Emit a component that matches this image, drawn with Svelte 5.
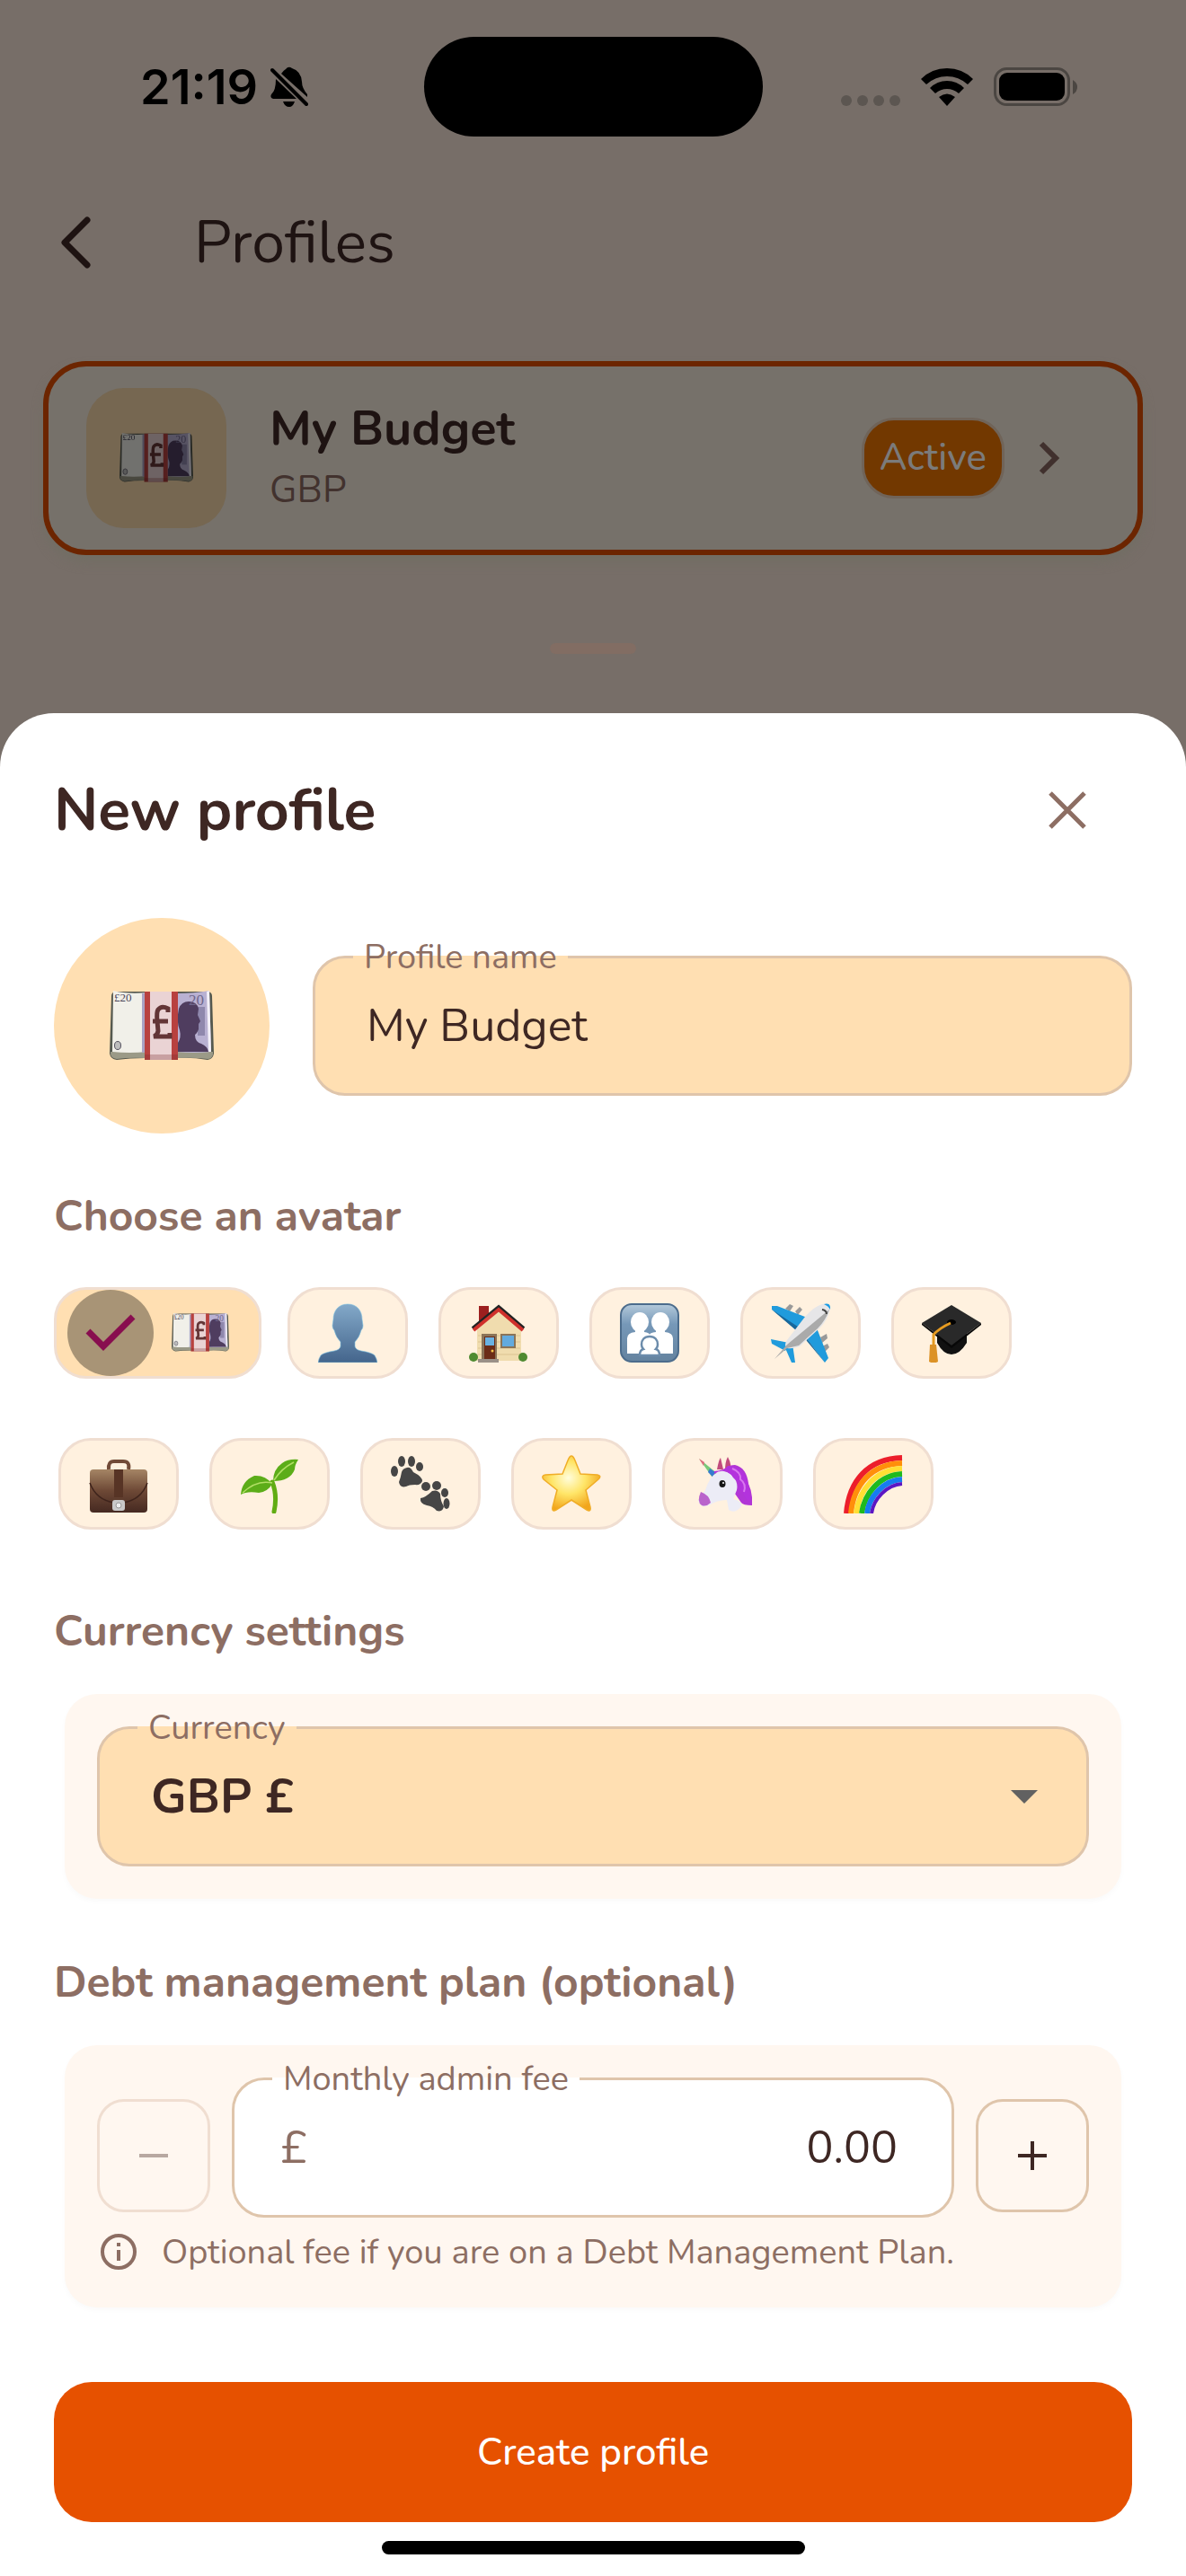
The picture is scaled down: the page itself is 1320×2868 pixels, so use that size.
<script lang="ts">
  const avatars = [
    "money", "person", "house", "family", "plane", "cap",
    "briefcase", "seedling", "paws", "star", "unicorn", "rainbow",
  ];

  let selected = $state("money");
  let profileName = $state("My Budget");
  let currency = $state("GBP");
  let fee = $state("0.00");

  const step = (by: number) => {
    fee = Math.max(0, Number(fee) + by).toFixed(2);
  };
</script>

{#snippet money()}
  <svg class="money" viewBox="0 0 116 78" aria-hidden="true">
    <path d="M2 6Q2 2 6 1L110 1Q114 2 114 6L116 70Q115 76 109 77Q92 74 76 75H40Q22 75 8 77Q1 76 0 70Z" fill="#55594f" />
    <path d="M1 68H115V71Q114 76 109 76Q94 74 76 75H40Q22 74 8 76Q1 75 1 70Z" fill="#9b9a87" />
    <path d="M4 0Q20 4 42 2V68Q22 70 3 68Z" fill="#f1f0e9" />
    <path d="M36 3L44 2V68L36 69Z" fill="#a9a3c4" />
    <path d="M74 3Q94 3 111 0L113 68Q94 70 74 68Z" fill="#b9b1d2" />
    <path d="M108 1L111 0L113 68H110Z" fill="#f3f0f8" />
    <path d="M98 18H106V50H98Z" fill="#8f88ad" />
    <path d="M77 20Q80 12 88 12Q97 12 99 20L98 27L101 34L99 37L99 43Q97 48 95 49Q95 57 102 59Q109 62 110 68H76V58Q80 52 78 44Q74 34 77 20Z" fill="#4f3d5f" />
    <text x="5" y="12" font-family="Liberation Serif, serif" font-size="13" fill="#4b4558">£20</text>
    <text x="88" y="16" font-family="Liberation Serif, serif" font-size="17" fill="#6f678c">20</text>
    <ellipse cx="9" cy="61" rx="3.5" ry="4.5" fill="#bdbdbd" stroke="#555260" />
    <path d="M39 1H76V77H39Z" fill="#b8413f" />
    <path d="M45 1H69V77H45Z" fill="#ead3d4" />
    <path d="M39 71H76V77H39Z" fill="#7a2a2a" opacity="0.3" />
    <path d="M65 24V20Q58 16 54 21Q52 24 53 34L54 45Q53 50 49 51H67V47M48 34H65" fill="none" stroke="#633536" stroke-width="5" />
  </svg>
{/snippet}

{#snippet art(name: string)}
  {#if name === "money"}
    {@render money()}
  {:else}
    <svg class="art" viewBox="0 0 66 66" aria-hidden="true">
      {#if name === "person"}
        <defs>
          <linearGradient id="person" x1="0" y1="0" x2="0" y2="1">
            <stop offset="0" stop-color="#83a9c9" /><stop offset="1" stop-color="#44658c" />
          </linearGradient>
        </defs>
        <path d="M33 1C43 1 49 8 49 18L50 25Q50 28 48 30Q46 38 41 43V48Q42 52 48 53Q60 55 63 58Q65 61 66 66H0Q1 61 3 58Q6 55 18 53Q24 52 25 48V43Q20 38 18 30Q16 28 16 25L17 18C17 8 23 1 33 1Z" fill="url(#person)" stroke="#78bfe0" stroke-width="0.6" />
      {:else if name === "house"}
        <path d="M11 3H22V20L11 28Z" fill="#9c1f1f" />
        <path d="M9 28L33 7L58 28V64H9Z" fill="#f0dcae" />
        <path d="M10 36H57M10 43H57M10 50H57M10 57H57" stroke="#dcc491" stroke-width="1" />
        <path d="M4 28L33 4L61 28" fill="none" stroke="#222" stroke-width="4" />
        <path d="M5 30L33 7L60 30" fill="none" stroke="#cf302b" stroke-width="4" />
        <path d="M14 34H31V64H14Z" fill="#8a7458" />
        <path d="M17 37H29V62H17Z" fill="#6b2c17" />
        <path d="M18 38H28V47H18Z" fill="#69b2e2" />
        <circle cx="26" cy="53" r="1.5" fill="#f6c64d" />
        <path d="M35 34H52V50H35Z" fill="#8a7458" />
        <path d="M37 36H50V48H37Z" fill="#62aade" />
        <circle cx="5" cy="60" r="5" fill="#4f8a31" /><circle cx="60" cy="60" r="5" fill="#4f8a31" />
        <path d="M10 62H33V66H10Z" fill="#9a9088" />
      {:else if name === "family"}
        <defs>
          <linearGradient id="family" x1="0" y1="0" x2="0" y2="1">
            <stop offset="0" stop-color="#b4cadb" /><stop offset="0.35" stop-color="#7698b8" /><stop offset="1" stop-color="#64839f" />
          </linearGradient>
        </defs>
        <rect x="1" y="1" width="64" height="64" rx="12" fill="url(#family)" stroke="#4c6c8c" stroke-width="2" />
        <g fill="#fff">
          <ellipse cx="22" cy="21" rx="10" ry="11" /><ellipse cx="45" cy="21" rx="10" ry="11" />
          <path d="M17 28H27V32Q33 33 33 35Q33 33 40 32V28H50V32Q59 33 59 39V56H8V39Q8 33 17 32Z" />
        </g>
        <path d="M33 37C39 37 42 41 42 46Q42 49 40 51Q44 52 44 58H22Q22 52 26 51Q24 49 24 46C24 41 27 37 33 37Z" fill="#fff" stroke="#6c8cab" stroke-width="2.5" />
      {:else if name === "plane"}
        <path d="M16 6L21 1L25 3L21 9ZM27 9L32 4L35 7L30 13ZM55 38L62 34L63 39L57 44ZM57 48L63 45L65 49L60 54Z" fill="#999" />
        <path d="M1 3L7 3L43 17L34 32L1 7ZM50 25L64 61L60 66L35 33ZM0 40L20 44L16 53L1 45ZM16 50L24 45L27 66L23 66Z" fill="#209bdc" />
        <path d="M1 7L33 28L29 31ZM36 34L60 66L40 42Z" fill="#17679b" />
        <path d="M57 1Q66-1 66 6Q64 17 55 27L32 48Q24 51 18 50Q14 47 18 41L38 15Q49 3 57 1Z" fill="#e6e6e8" />
        <path d="M65 7Q61 19 52 28L31 47L18 50L4 62L18 46Z" fill="#aaa" />
        <path d="M59 1Q67-1 66 7Q64 3 59 1Z" fill="#189be4" />
        <path d="M57 7Q62 8 62 12" stroke="#444" stroke-width="2" fill="none" />
      {:else if name === "cap"}
        <path d="M17 27H50V44Q42 57 33 57Q24 57 17 44Z" fill="#111" />
        <path d="M33 2L66 22L33 47L0 22Z" fill="#292929" />
        <path d="M0 22L33 47L66 22V24L33 50L0 24Z" fill="#080808" />
        <ellipse cx="33" cy="21" rx="5" ry="3" fill="#000" />
        <path d="M32 22Q19 28 13 35V47" fill="none" stroke="#e69b20" stroke-width="3" />
        <path d="M9 46H16L18 65Q13 68 8 65Z" fill="#dc9226" />
      {:else if name === "briefcase"}
        <defs>
          <linearGradient id="briefcase" x1="0" y1="0" x2="0" y2="1">
            <stop offset="0" stop-color="#a58565" /><stop offset="0.5" stop-color="#6d4835" /><stop offset="1" stop-color="#452921" />
          </linearGradient>
        </defs>
        <path d="M22 17Q21 8 28 8H38Q46 8 44 17" fill="none" stroke="#724b38" stroke-width="4" />
        <rect x="1" y="17" width="64" height="48" rx="4" fill="url(#briefcase)" />
        <path d="M1 32Q8 51 28 54H38Q58 51 65 32" fill="none" stroke="#3f241c" stroke-width="1.5" />
        <path d="M28 17H38V48H28Z" fill="#573425" />
        <rect x="26" y="51" width="14" height="12" rx="3" fill="#c9c9c9" /><circle cx="33" cy="57" r="3" fill="#eee" stroke="#999" />
      {:else if name === "seedling"}
        <path d="M36 31Q42 46 38 64" fill="none" stroke="#61ac13" stroke-width="5" stroke-linecap="round" />
        <path d="M37 30Q37 17 47 10Q54 5 65 6Q61 12 61 17Q56 30 37 30ZM36 33Q31 42 21 43Q8 41 1 45Q2 30 16 24Q28 23 36 33Z" fill="#5cad19" />
        <path d="M38 29Q46 16 60 9M36 32Q19 28 3 43" fill="none" stroke="#b2df65" stroke-width="1.5" />
      {:else if name === "paws"}
        <g fill="#464646">
          <path d="M18 15Q22 14 25 20Q35 25 35 30Q33 35 27 34Q20 34 17 36Q10 38 9 31Q11 26 12 20Q13 16 18 15Z" />
          <ellipse cx="4" cy="19" rx="4" ry="6" /><ellipse cx="12" cy="8" rx="4" ry="6" />
          <ellipse cx="23" cy="8" rx="4" ry="6" /><ellipse cx="32" cy="14" rx="4" ry="5" />
          <path d="M46 41Q52 39 55 44Q55 52 59 58Q58 65 51 63Q47 58 40 57Q32 55 33 49Q39 48 46 41Z" />
          <ellipse cx="39" cy="36" rx="5" ry="5" /><ellipse cx="51" cy="35" rx="5" ry="5" />
          <ellipse cx="60" cy="43" rx="4" ry="5" /><ellipse cx="62" cy="55" rx="3.5" ry="6" />
        </g>
      {:else if name === "star"}
        <defs>
          <radialGradient id="star" cx="0.45" cy="0.4" r="0.6">
            <stop offset="0" stop-color="#fffddc" /><stop offset="0.5" stop-color="#ffe567" /><stop offset="1" stop-color="#f2a51c" />
          </radialGradient>
        </defs>
        <path d="M33 2Q35 2 37 7L43 22L62 23Q67 24 63 28L49 40L54 59Q55 65 50 62L33 51L16 62Q11 65 12 59L17 40L2 28Q-1 24 4 23L23 22L29 7Q31 2 33 2Z" fill="url(#star)" stroke="#f0ad27" stroke-width="1.5" />
      {:else if name === "unicorn"}
        <path d="M28 22L7 5L22 26Z" fill="#78c979" />
        <path d="M7 5L13 9L12 13Z" fill="#e06b7f" />
        <path d="M19 16L25 20L23 26L17 20Z" fill="#367bd0" />
        <path d="M34 22Q35 12 47 12Q60 15 62 33Q67 43 66 57Q56 57 54 54L40 34Z" fill="#b135d6" />
        <path d="M27 17Q29 6 31 4L34 17ZM36 19Q36 8 39 3Q44 12 42 22Z" fill="#c14b7d" />
        <path d="M28 20Q38 17 44 24Q51 31 49 40L45 50Q56 53 54 58Q47 67 40 62Q39 56 38 51Q27 51 18 57Q8 61 6 51L14 40Q19 24 28 20Z" fill="#ececf6" />
        <path d="M9 42Q18 45 20 54Q15 59 10 57Q4 53 9 42Z" fill="#b963cb" />
        <path d="M24 22Q33 15 43 23Q46 29 53 31Q50 37 56 43Q58 50 64 53Q65 39 59 25Q51 12 39 13Q36 18 24 19Z" fill="#b333dd" />
        <path d="M44 16Q54 20 53 28Q60 33 57 42" fill="none" stroke="#d978ef" stroke-width="2" />
        <ellipse cx="33" cy="33" rx="3.5" ry="4" fill="#161616" /><circle cx="34" cy="32" r="1" fill="#fff" />
      {:else if name === "rainbow"}
        <g fill="none" stroke-width="6">
          <path d="M3 66C6 30 27 5 65 4" stroke="#ec1e2b" />
          <path d="M8 66C11 34 31 11 65 10" stroke="#ff8f0a" />
          <path d="M14 66C17 39 36 17 65 16" stroke="#ffdf34" />
          <path d="M20 66C23 44 40 23 65 22" stroke="#1fba1e" />
          <path d="M26 66C28 48 44 29 65 28" stroke="#167cf0" />
          <path d="M31 66C33 50 48 34 65 33" stroke="#5c16c4" stroke-width="4" />
        </g>
      {/if}
    </svg>
  {/if}
{/snippet}

<div class="screen">
  <div class="status">
    <div class="clock">
      <span>21:19</span>
      <svg width="42" height="46" viewBox="0 0 42 46" aria-hidden="true">
        <path d="M12 8Q15 4 17 3Q20-1 24 2Q34 5 35 17Q35 24 41 31V34ZM6 14L29 36H3Q-1 35 1 31Q6 27 6 14ZM14 39H27Q25 45 21 45Q16 45 14 39Z" />
        <path d="M2 4L40 42" stroke="#000" stroke-width="4" stroke-linecap="round" />
      </svg>
    </div>
    <div class="island"></div>
    <div class="signals">
      <svg width="66" height="42" viewBox="0 0 66 42" aria-hidden="true">
        <g fill="#5c5651"><circle cx="6" cy="36" r="6" /><circle cx="24" cy="36" r="6" /><circle cx="42" cy="36" r="6" /><circle cx="60" cy="36" r="6" /></g>
      </svg>
      <svg width="58" height="42" viewBox="0 0 58 42" aria-hidden="true">
        <path d="M0 12Q12 0 29 0T58 12L52 18Q42 9 29 9T6 18ZM10 22Q18 14 29 14T48 22L42 28Q36 23 29 23T16 28ZM20 32Q29 25 38 32L29 42Z" />
      </svg>
      <svg width="93" height="44" viewBox="0 0 93 44" aria-hidden="true">
        <rect x="1.5" y="1.5" width="82" height="40" rx="13" fill="none" stroke="#4b4642" stroke-width="3" />
        <rect x="6" y="6" width="73" height="31" rx="9" /><path d="M88 14Q93 17 93 22T88 30Z" fill="#4b4642" />
      </svg>
    </div>
  </div>

  <header class="app-bar">
    <button class="bare back" aria-label="Back">
      <svg width="36" height="60" viewBox="0 0 36 60" aria-hidden="true">
        <path d="M31 5L6 30L31 55" fill="none" stroke="#1e1312" stroke-width="7" stroke-linecap="round" stroke-linejoin="round" />
      </svg>
    </button>
    <h1>Profiles</h1>
  </header>

  <button class="profile">
    <span class="thumb">{@render money()}</span>
    <span class="names">
      <strong>My Budget</strong>
      <span>GBP</span>
    </span>
    <span class="badge">Active</span>
    <svg width="24" height="38" viewBox="0 0 24 38" aria-hidden="true">
      <path d="M3 3L19 19L3 35" fill="none" stroke="#40302d" stroke-width="6" />
    </svg>
  </button>

  <div class="handle"></div>

  <main class="sheet">
    <div class="title-row">
      <h2>New profile</h2>
      <button class="bare close" aria-label="Close">
        <svg width="42" height="42" viewBox="0 0 42 42" aria-hidden="true">
          <path d="M2 2L40 40M40 2L2 40" stroke="#8d6e63" stroke-width="5" />
        </svg>
      </button>
    </div>

    <div class="identity">
      <div class="avatar">{@render money()}</div>
      <div class="field filled">
        <label for="name">Profile name</label>
        <input id="name" type="text" bind:value={profileName} />
      </div>
    </div>

    <h3>Choose an avatar</h3>
    <div class="chips">
      {#each avatars as name (name)}
        <button
          class="chip"
          class:selected={selected === name}
          aria-label={name}
          aria-pressed={selected === name}
          onclick={() => (selected = name)}
        >
          {#if selected === name}
            <span class="tick">
              <svg width="56" height="42" viewBox="0 0 56 42" aria-hidden="true">
                <path d="M3 19L20 36L53 3" fill="none" stroke="#880e4f" stroke-width="7" />
              </svg>
            </span>
          {/if}
          {@render art(name)}
        </button>
      {/each}
    </div>

    <h3>Currency settings</h3>
    <section class="card">
      <div class="field filled">
        <label for="currency">Currency</label>
        <select id="currency" bind:value={currency}>
          <option value="GBP">GBP £</option>
        </select>
        <svg class="caret" width="30" height="15" viewBox="0 0 30 15" aria-hidden="true">
          <path d="M0 0H30L15 15Z" fill="#616161" />
        </svg>
      </div>
    </section>

    <h3>Debt management plan (optional)</h3>
    <section class="card">
      <div class="stepper">
        <button class="step" aria-label="Decrease" disabled={Number(fee) <= 0} onclick={() => step(-1)}>
          <svg width="32" height="32" viewBox="0 0 32 32" aria-hidden="true">
            <path d="M0 16H32" stroke="#b8a8a1" stroke-width="4" />
          </svg>
        </button>
        <div class="field">
          <label for="fee">Monthly admin fee</label>
          <span class="prefix">£</span>
          <input id="fee" class="amount" type="text" inputmode="decimal" bind:value={fee} />
        </div>
        <button class="step" aria-label="Increase" onclick={() => step(1)}>
          <svg width="32" height="32" viewBox="0 0 32 32" aria-hidden="true">
            <path d="M0 16H32M16 0V32" stroke="#3e2723" stroke-width="4" />
          </svg>
        </button>
      </div>
      <p class="hint">
        <svg width="40" height="40" viewBox="0 0 40 40" aria-hidden="true">
          <circle cx="20" cy="20" r="18" fill="none" stroke="#8d6e63" stroke-width="4" />
          <path d="M20 10V14M20 18V30" stroke="#8d6e63" stroke-width="4" />
        </svg>
        <span>Optional fee if you are on a Debt Management Plan.</span>
      </p>
    </section>

    <button class="submit">Create profile</button>
    <div class="home"></div>
  </main>
</div>

<style>
  :global(body) {
    background: #776e68;
  }
  .screen {
    --ink: #3e2723;
    --muted: #8d6e63;
    --fill: #ffdfb2;
    --line: #dfc5ab;
    min-height: 100vh;
    display: flex;
    flex-direction: column;
    background: #776e68;
    color: var(--ink);
    font-family: Nunito, "Open Sans", sans-serif;
    font-weight: 400;
  }
  .screen :is(button, input, select) {
    box-sizing: border-box;
    margin: 0;
    color: inherit;
    font-family: inherit;
    font-weight: inherit;
  }
  svg {
    display: block;
    flex: none;
  }
  .bare {
    padding: 0;
    border: 0;
    background: none;
  }
  h1, h2, h3, p {
    margin: 0;
  }

  .status {
    display: grid;
    grid-template-columns: 1fr 377px 1fr;
    align-items: center;
    box-sizing: border-box;
    height: 186px;
    padding-top: 7px;
  }
  .clock {
    display: flex;
    align-items: center;
    gap: 14px;
    padding-left: 156px;
    color: #000;
    font: 600 54px/66px Inter, sans-serif;
  }
  .island {
    height: 111px;
    border-radius: 56px;
    background: #000;
  }
  .signals {
    display: flex;
    align-items: center;
    justify-content: flex-end;
    gap: 23px;
    padding-right: 121px;
  }

  .app-bar {
    display: flex;
    align-items: center;
    height: 168px;
    padding: 0 66px;
    color: #1e1312;
  }
  .back {
    width: 150px;
  }
  h1 {
    font-size: 66px;
    font-weight: 400;
    line-height: 84px;
  }

  .profile {
    display: flex;
    align-items: center;
    height: 216px;
    padding: 0 86px 0 42px;
    border: 6px solid #6c2500;
    border-radius: 48px;
    background: #76716a;
    box-shadow: 0 8px 12px #726e64;
    text-align: left;
  }
  .screen .profile {
    margin: 48px 48px 0;
    color: #1e1312;
  }
  .thumb {
    display: grid;
    place-items: center;
    width: 156px;
    height: 156px;
    border-radius: 42px;
    background: #766751;
  }
  .thumb .money {
    width: 82px;
    filter: brightness(0.47);
  }
  .names {
    display: flex;
    flex: 1;
    flex-direction: column;
    gap: 6px;
    padding-left: 48px;
  }
  .names strong {
    font-size: 54px;
    font-weight: 700;
    line-height: 66px;
  }
  .names span {
    color: #42322e;
    font-size: 42px;
    line-height: 60px;
  }
  .badge {
    margin-right: 38px;
    padding: 12px 17px;
    border: 3px solid #706459;
    border-radius: 36px;
    background: #723800;
    color: #7b7b7b;
    font-size: 42px;
    font-weight: 500;
    line-height: 60px;
  }

  .handle {
    align-self: center;
    width: 96px;
    height: 12px;
    margin: 98px 0 66px;
    border-radius: 6px;
    background: #826d63;
  }

  .sheet {
    display: flex;
    flex: 1;
    flex-direction: column;
    padding: 48px 60px 24px;
    border-radius: 60px 60px 0 0;
    background: #fff;
  }
  .title-row {
    display: flex;
    align-items: center;
    justify-content: space-between;
    height: 120px;
    margin-bottom: 60px;
  }
  h2 {
    font-size: 66px;
    font-weight: 700;
    line-height: 84px;
  }
  .close {
    display: grid;
    place-items: center;
    width: 144px;
    height: 120px;
  }
  h3 {
    color: var(--muted);
    font-size: 48px;
    font-weight: 700;
    line-height: 72px;
  }

  .identity {
    display: flex;
    align-items: center;
    gap: 48px;
    margin-bottom: 56px;
  }
  .avatar {
    display: grid;
    place-items: center;
    flex: none;
    width: 240px;
    height: 240px;
    border-radius: 50%;
    background: var(--fill);
  }
  .avatar .money {
    width: 116px;
  }

  .field {
    position: relative;
    display: flex;
    flex: 1;
    align-items: center;
    box-sizing: border-box;
    height: 156px;
    min-width: 0;
    border: 3px solid var(--line);
    border-radius: 36px;
    background: #fff;
  }
  .filled {
    background: var(--fill);
  }
  /* the lower half of the label covers the border it sits on */
  .field label {
    position: absolute;
    top: -29px;
    left: 42px;
    padding: 4px 12px 0;
    background: linear-gradient(transparent 50%, #fff 50%);
    color: var(--muted);
    font-size: 38px;
    line-height: 48px;
  }
  .filled label {
    background: linear-gradient(transparent 50%, var(--fill) 50%);
  }
  .field input,
  .field select {
    appearance: none;
    flex: 1;
    min-width: 0;
    height: 100%;
    padding: 0 60px 0 57px;
    border: 0;
    outline: 0;
    background: none;
    font-size: 50px;
  }
  .screen .field select {
    font-size: 54px;
    font-weight: 700;
  }
  .caret {
    position: absolute;
    right: 54px;
    pointer-events: none;
  }
  .prefix {
    padding-left: 51px;
    color: var(--muted);
    font-size: 50px;
  }
  .field .amount {
    text-align: right;
  }

  .chips {
    display: flex;
    flex-wrap: wrap;
    gap: 66px 24px;
    margin: 43px 0 77px;
    padding-right: 96px;
  }
  .chip {
    display: flex;
    align-items: center;
    justify-content: center;
    width: 134px;
    height: 102px;
    padding: 0;
    border: 3px solid #f0ded1;
    border-radius: 36px;
    background: #fff1df;
  }
  .screen .chip:not(.selected) {
    margin: 0 5px;
  }
  .chip.selected {
    justify-content: flex-start;
    gap: 20px;
    width: 231px;
    padding-left: 12px;
    background: var(--fill);
  }
  .art {
    width: 66px;
    height: 66px;
  }
  .chip .money {
    width: 64px;
  }
  .tick {
    display: grid;
    place-items: center;
    width: 96px;
    height: 96px;
    border-radius: 50%;
    background: #a89476;
  }

  .card {
    margin: 34px 12px 57px;
    padding: 36px;
    border-radius: 36px;
    background: #fff7f0;
    box-shadow: 0 3px 6px #fafafa;
  }
  .stepper {
    display: flex;
    gap: 24px;
  }
  .step {
    display: grid;
    place-items: center;
    width: 126px;
    height: 126px;
    padding: 0;
    border: 3px solid var(--line);
    border-radius: 30px;
    background: none;
  }
  .screen .step {
    margin-top: 24px;
  }
  .step:disabled {
    border-color: #f0ded1;
  }
  .hint {
    display: flex;
    align-items: center;
    gap: 28px;
    height: 52px;
    margin-top: 12px;
    padding-left: 4px;
    color: var(--muted);
    font-size: 38px;
  }

  .submit {
    height: 156px;
    border: 0;
    border-radius: 42px;
    background: #e65100;
    font-size: 42px;
  }
  .screen .submit {
    margin-top: 26px;
    color: #fff;
    font-weight: 500;
  }
  .home {
    align-self: center;
    width: 471px;
    height: 15px;
    margin-top: 21px;
    border-radius: 8px;
    background: #000;
  }
</style>
